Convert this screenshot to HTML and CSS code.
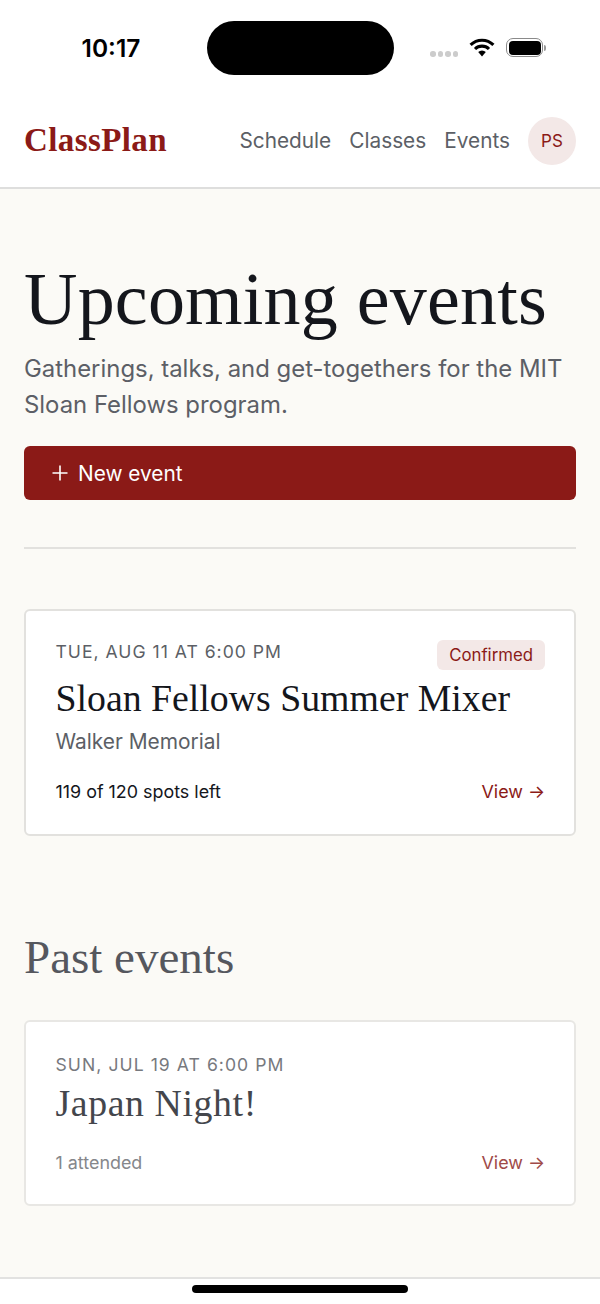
FILE: index.html
```html
<!DOCTYPE html>
<html lang="en">
<head>
  <meta charset="utf-8">
  <link rel="stylesheet" href="styles.css">
  <title>ClassPlan</title>
</head>
<body>
  <div class="status-bar">
    <span class="clock">10:17</span>
    <div class="island"></div>
    <div class="status-icons">
      <div class="dots"><i></i><i></i><i></i><i></i></div>
      <svg class="wifi" width="26" height="19" viewBox="0 0 26 19">
        <path d="M1.6 6.9 A16.2 16.2 0 0 1 24.4 6.9" fill="none" stroke="#000" stroke-width="3.1"/>
        <path d="M6 11 A10 10 0 0 1 20 11" fill="none" stroke="#000" stroke-width="3.1"/>
        <path d="M9.2 14.1 A5.4 5.4 0 0 1 16.8 14.1 L13 18.6 Z" fill="#000"/>
      </svg>
      <div class="battery"><div class="battery-fill"></div></div>
      <div class="battery-cap"></div>
    </div>
  </div>

  <header class="topnav">
    <a class="logo">ClassPlan</a>
    <nav class="links">
      <a>Schedule</a>
      <a>Classes</a>
      <a>Events</a>
      <span class="avatar">PS</span>
    </nav>
  </header>

  <main class="content">
    <h1>Upcoming events</h1>
    <p class="intro">Gatherings, talks, and get-togethers for the MIT Sloan Fellows program.</p>
    <a class="new-btn">
      <svg width="16" height="16" viewBox="0 0 16 16"><path d="M8 .5v15M.5 8h15" stroke="#fff" stroke-width="1.6" fill="none"/></svg>
      New event
    </a>
    <hr class="rule">

    <article class="card">
      <div class="card-top">
        <div class="when">TUE, AUG 11 AT 6:00 PM</div>
        <span class="badge">Confirmed</span>
      </div>
      <h3 class="card-title">Sloan Fellows Summer Mixer</h3>
      <div class="place">Walker Memorial</div>
      <div class="card-foot">
        <span class="spots">119 of 120 spots left</span>
        <a class="view">View →</a>
      </div>
    </article>

    <h2 class="past-head">Past events</h2>

    <article class="card past">
      <div class="when">SUN, JUL 19 AT 6:00 PM</div>
      <h3 class="card-title">Japan Night!</h3>
      <div class="card-foot">
        <span class="spots">1 attended</span>
        <a class="view">View →</a>
      </div>
    </article>
  </main>

  <div class="home-bar"><div class="home-pill"></div></div>
</body>
</html>
```

FILE: styles.css
```css
:root {
  --bg: #fbfaf6;
  --red: #8b1a17;
  --line: #e2e1de;
  --muted: #5c5f66;
}

* {
  box-sizing: border-box;
}

html, body {
  margin: 0;
  height: 100%;
}

body {
  display: flex;
  flex-direction: column;
  height: 1304px;
  background: var(--bg);
  color: #14161c;
  font-family: Inter, "Liberation Sans", sans-serif;
  overflow: hidden;
}

/* phone chrome */
.status-bar {
  display: flex;
  align-items: center;
  height: 96px;
  background: #fff;
  flex: none;
}

.clock {
  width: 207px;
  padding-left: 15px;
  text-align: center;
  font-size: 24.5px;
  font-weight: 600;
  color: #000;
}

.island {
  width: 187px;
  height: 54px;
  border-radius: 27px;
  background: #000;
}

.status-icons {
  display: flex;
  align-items: center;
  margin-left: 36px;
  margin-top: -1px;
}

.dots {
  display: flex;
  gap: 2px;
  margin-top: 13px;
  margin-right: 11px;
}

.dots i {
  width: 5.5px;
  height: 5.5px;
  border-radius: 50%;
  background: #ccc;
}

.wifi {
  margin-right: 11px;
}

.battery {
  width: 37px;
  height: 19px;
  padding: 1.5px;
  border: 1.5px solid #8a8a8a;
  border-radius: 7px;
}

.battery-fill {
  height: 100%;
  border-radius: 4px;
  background: #000;
}

.battery-cap {
  width: 2px;
  height: 6px;
  margin-left: 1px;
  border-radius: 0 2px 2px 0;
  background: #999;
}

.topnav {
  display: flex;
  align-items: center;
  justify-content: space-between;
  flex: none;
  height: 93px;
  padding: 0 24px 2px;
  background: #fff;
  border-bottom: 2px solid #dededd;
}

.logo {
  font-family: "Liberation Serif", serif;
  font-size: 33px;
  font-weight: 700;
  letter-spacing: 0.4px;
  color: var(--red);
}

.links {
  display: flex;
  align-items: center;
  gap: 18px;
  font-size: 20.8px;
  color: var(--muted);
}

.avatar {
  display: flex;
  align-items: center;
  justify-content: center;
  width: 48px;
  height: 48px;
  border-radius: 50%;
  background: #f3e8e7;
  color: var(--red);
  font-size: 17px;
  font-weight: 400;
}

.content {
  flex: 1;
  padding: 0 24px;
}

h1 {
  margin: 70px 0 0;
  font-family: "Liberation Serif", serif;
  font-size: 74px;
  font-weight: 400;
  line-height: 80px;
  letter-spacing: 0.2px;
}

.intro {
  margin: 12px 0 0;
  font-size: 23.9px;
  line-height: 36px;
  color: var(--muted);
}

.new-btn {
  display: flex;
  align-items: center;
  gap: 10px;
  height: 54px;
  margin-top: 23px;
  padding-left: 28px;
  border-radius: 6px;
  background: var(--red);
  color: #fff;
  font-size: 20.8px;
}

.rule {
  height: 2px;
  margin: 47px 0 60px;
  border: 0;
  background: var(--line);
}

.card {
  padding: 29px 29px 28px 29.5px;
  border: 2px solid var(--line);
  border-radius: 6px;
  background: #fff;
}

.card-top {
  display: flex;
  align-items: flex-start;
  justify-content: space-between;
}

.when {
  font-size: 17.6px;
  line-height: 24px;
  letter-spacing: 1px;
  color: var(--muted);
}

.badge {
  padding: 6px 12px;
  border-radius: 6px;
  background: #f3e8e7;
  color: var(--red);
  font-size: 16.8px;
  font-weight: 400;
  line-height: 18px;
}

.card-title {
  margin: 3px 0 0;
  font-family: "Liberation Serif", serif;
  font-size: 37.8px;
  font-weight: 400;
  line-height: 50px;
}

.place {
  margin-top: 5px;
  font-size: 20.9px;
  line-height: 28px;
  color: var(--muted);
}

.card-foot {
  display: flex;
  align-items: center;
  justify-content: space-between;
  margin-top: 22px;
  font-size: 17.9px;
  line-height: 28px;
}

.view {
  color: var(--red);
}

.past-head {
  margin: 91px 0 33px;
  font-family: "Liberation Serif", serif;
  font-size: 47px;
  font-weight: 400;
  line-height: 60px;
  color: #55575e;
}

.past {
  padding-top: 31px;
  padding-bottom: 27px;
  border-color: #e8e7e4;
}

.past .when {
  color: #77797e;
  letter-spacing: 1.05px;
}

.past .card-title {
  margin-top: 1px;
  letter-spacing: 0.6px;
  color: #44464c;
}

.past .card-foot {
  margin-top: 21px;
}

.past .spots {
  color: #85878b;
}

.past .view {
  color: #a04a48;
}

.home-bar {
  display: flex;
  justify-content: center;
  flex: none;
  height: 27px;
  padding-top: 6px;
  background: #fff;
  border-top: 2px solid #e2e2e1;
}

.home-pill {
  width: 216px;
  height: 8px;
  border-radius: 4px;
  background: #000;
}
```
